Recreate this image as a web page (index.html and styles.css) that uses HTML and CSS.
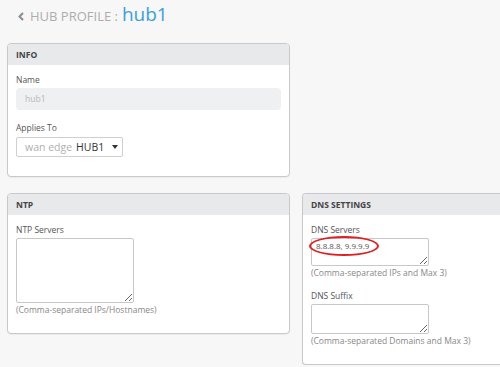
FILE: index.html
```html
<!DOCTYPE html>
<html lang="en">
<head>
  <meta charset="UTF-8">
  <title>Hub Profile</title>
  <meta name="viewport" content="width=device-width, initial-scale=1">
  <link rel="stylesheet" href="styles.css">
</head>
<body>
  <div class="page-title">
    <svg class="back" width="6" height="9" viewBox="0 0 6 9"><path d="M5 1 L1.5 4.5 L5 8" fill="none" stroke="#8c8c8c" stroke-width="2"/></svg>
    <span class="crumb">HUB PROFILE :</span>
    <span class="name">hub1</span>
  </div>

  <div class="grid">
    <div class="card">
      <div class="card-head">INFO</div>
      <div class="card-body">
        <label>Name</label>
        <div class="input disabled">hub1</div>
        <label class="gap">Applies To</label>
        <div class="select">
          <span class="muted">wan edge</span>
          <span class="value">HUB1</span>
          <span class="caret"></span>
        </div>
      </div>
    </div>
    <div></div>

    <div class="card">
      <div class="card-head">NTP</div>
      <div class="card-body">
        <label>NTP Servers</label>
        <textarea class="tall"></textarea>
        <div class="hint">(Comma-separated IPs/Hostnames)</div>
      </div>
    </div>

    <div class="card cut">
      <div class="card-head">DNS SETTINGS</div>
      <div class="card-body">
        <label>DNS Servers</label>
        <div class="field">
          <textarea class="short">8.8.8.8, 9.9.9.9</textarea>
          <span class="mark"></span>
        </div>
        <div class="hint">(Comma-separated IPs and Max 3)</div>
        <label class="gap2">DNS Suffix</label>
        <textarea class="short2"></textarea>
        <div class="hint">(Comma-separated Domains and Max 3)</div>
      </div>
    </div>
  </div>
</body>
</html>
```

FILE: styles.css
```css
html, body {
  overflow: hidden;
}
body {
  margin: 0;
  padding: 0 0 0 7px;
  background: #f7f7f7;
  font-family: 'Open Sans', sans-serif;
  font-size: 8.5px;
  color: #555;
}
.page-title {
  height: 43px;
  display: flex;
  align-items: baseline;
  padding-left: 11px;
  box-sizing: border-box;
  padding-top: 1px;
}
.back {
  margin-right: 6px;
}
.crumb {
  font-size: 13px;
  color: #adadad;
}
.name {
  font-size: 19px;
  color: #3b9fdc;
  margin-left: 4px;
}
.grid {
  display: grid;
  grid-template-columns: 283px 1fr;
  column-gap: 12px;
  row-gap: 16px;
  align-items: start;
}
.card {
  background: #fff;
  border: 1px solid #c9c9c9;
  border-radius: 4px;
  box-shadow: 0 1px 1px rgba(0,0,0,0.05);
  overflow: hidden;
}
.card.cut {
  border-right: 0;
  border-radius: 4px 0 0 4px;
}
.card-head {
  background: #e8e9ea;
  height: 21px;
  line-height: 21px;
  padding-left: 8px;
  font-weight: bold;
  font-size: 8.5px;
  color: #444;
}
.card-body {
  padding: 9px 8px 17px;
}
label {
  display: block;
  line-height: 12px;
  margin-bottom: 2px;
  color: #555;
}
label.gap {
  margin-top: 12px;
  margin-bottom: 3px;
}
label.gap2 {
  margin-top: 11px;
}
.input {
  height: 22px;
  line-height: 22px;
  border-radius: 4px;
  padding-left: 9px;
}
.input.disabled {
  background: #eef0f1;
  color: #b8b8b8;
}
.select {
  display: inline-flex;
  align-items: center;
  white-space: nowrap;
  height: 20px;
  width: 107px;
  box-sizing: border-box;
  border: 1px solid #cfcfcf;
  border-radius: 2px;
  padding-left: 8px;
  margin-bottom: 2px;
  font-size: 10.5px;
}
.muted {
  color: #b0b0b0;
  margin-right: 4px;
}
.value {
  color: #333;
}
.caret {
  width: 0;
  height: 0;
  border-left: 3.5px solid transparent;
  border-right: 3.5px solid transparent;
  border-top: 4px solid #333;
  margin-left: 8px;
}
textarea {
  display: block;
  box-sizing: border-box;
  width: 118px;
  border: 1px solid #c8c8c8;
  border-radius: 2px;
  font-family: 'Open Sans', sans-serif;
  font-size: 8px;
  line-height: 12px;
  color: #555;
  padding: 1px 4px 0;
  margin: 0;
}
textarea.tall {
  height: 65px;
}
textarea.short {
  height: 28px;
}
textarea.short2 {
  height: 30px;
}
.field {
  position: relative;
  width: 118px;
}
.mark {
  position: absolute;
  left: -2px;
  top: -2px;
  width: 70px;
  height: 20px;
  box-sizing: border-box;
  border: 2px solid #e02020;
  border-radius: 50%;
}
.hint {
  line-height: 12px;
  margin-top: 1px;
  color: #888;
}
```
